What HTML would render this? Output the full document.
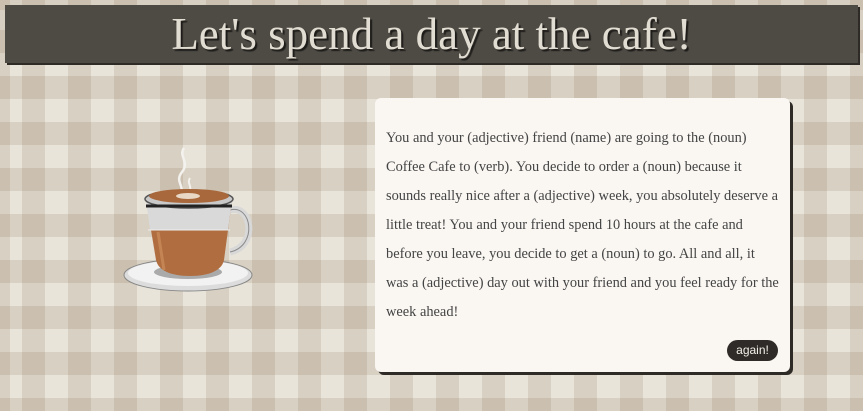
<!DOCTYPE html>
<html><head><meta charset="utf-8"><style>
html,body{margin:0;width:863px;height:411px;overflow:hidden}
body{background-color:#e8e4da;
background-image:repeating-linear-gradient(90deg,rgba(150,128,100,.2) 0 23px,transparent 23px 46px),repeating-linear-gradient(0deg,rgba(150,128,100,.2) 0 23px,transparent 23px 46px);
background-position:22px 0,0 10px;position:relative;font-family:"Liberation Serif",serif}
.hdr{position:absolute;left:5px;top:5px;width:853px;height:58px;background:#4e4b45;box-shadow:2px 2px 0 #2e2b27;text-align:center;color:#e2ddd2;font-size:45px;line-height:58px;text-shadow:2px 2px 1px #1e1c19}
.card{position:absolute;left:375px;top:98px;width:415px;height:274px;background:#faf7f3;border-radius:6px;box-shadow:3px 3px 0 #2e2b27;box-sizing:border-box;padding:26px 10px 0 11px;color:#444;font-size:14.4px;line-height:29px}
.btn{position:absolute;left:352px;top:242px;width:51px;height:21px;border-radius:11px;background:#2f2b28;color:#f3efe8;font:12px/21px "Liberation Sans",sans-serif;text-align:center}
</style></head><body>
<div class="hdr">Let's spend a day at the cafe!</div>
<svg style="position:absolute;left:118px;top:140px" width="145" height="160" viewBox="0 0 145 160">
<path d="M66 8c-6 8 6 14-2 24s4 14-2 24" stroke="#f4f2ee" stroke-width="2.5" fill="none"/>
<path d="M72 38c-4 6 4 8-2 16" stroke="#f4f2ee" stroke-width="2" fill="none"/>
<ellipse cx="70" cy="135" rx="64" ry="16" fill="#dcdcdc" stroke="#888" stroke-width="1"/>
<ellipse cx="70" cy="133" rx="60" ry="13" fill="#f2f2f2"/>
<ellipse cx="70" cy="132" rx="34" ry="7" fill="#aaa"/>
<path d="M112 70c22-6 28 36 0 42" stroke="#d8d8d8" stroke-width="7" fill="none"/>
<path d="M112 70c22-6 28 36 0 42" stroke="#8a8a8a" stroke-width="1" fill="none"/>
<path d="M28 60h86l-8 60c-2 10-14 16-34 16s-32-6-34-16z" fill="#b06e40"/>
<path d="M28 60h86l-4 30H32z" fill="#d9d9d9"/>
<path d="M30 90h82" stroke="#eee" stroke-width="1"/>
<path d="M40 92l6 38" stroke="#d99a66" stroke-width="3" opacity=".5"/>
<ellipse cx="71" cy="59" rx="44" ry="9" fill="#c9c9c9" stroke="#555" stroke-width="1.5"/>
<path d="M28 66h86" stroke="#222" stroke-width="3"/>
<ellipse cx="71" cy="56" rx="40" ry="7" fill="#a8683c"/>
<ellipse cx="70" cy="56" rx="12" ry="3" fill="#e9d8c6"/>
</svg>
<div class="card">You and your (adjective) friend (name) are going to the (noun) Coffee Cafe to (verb). You decide to order a (noun) because it sounds really nice after a (adjective) week, you absolutely deserve a little treat! You and your friend spend 10 hours at the cafe and before you leave, you decide to get a (noun) to go. All and all, it was a (adjective) day out with your friend and you feel ready for the week ahead!<div class="btn">again!</div></div>
</body></html>
